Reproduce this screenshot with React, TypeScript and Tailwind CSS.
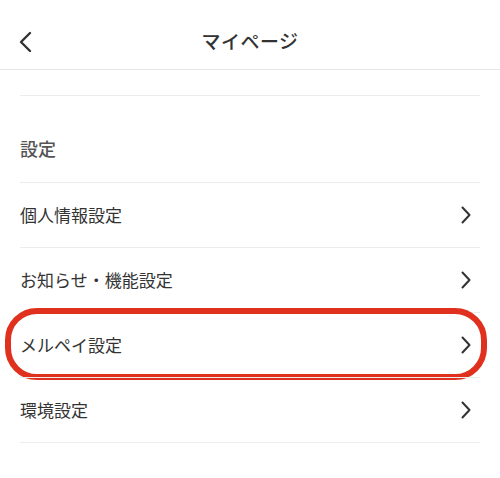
const Chevron = () => (
  <svg width="10" height="18" viewBox="0 0 10 18" className="shrink-0">
    <polyline points="1.5,1.5 8.5,9 1.5,16.5" fill="none" stroke="#333" strokeWidth="2" strokeLinecap="round" strokeLinejoin="round" />
  </svg>
)

const rows = ["個人情報設定", "お知らせ・機能設定", "メルペイ設定", "環境設定"]

export default function App() {
  return (
    <div
      className="w-[500px] h-[478px] bg-white overflow-hidden text-[#333]"
      style={{ fontFamily: '"Noto Sans CJK JP", "Noto Sans", sans-serif' }}
    >
      {/* header */}
      <div className="relative h-[70px] flex items-center justify-center border-b border-[#e6e6e6]">
        <svg width="14" height="22" viewBox="0 0 14 22" className="absolute left-[18px] top-[31px]">
          <polyline points="12,2 3,11 12,20" fill="none" stroke="#333" strokeWidth="2.4" strokeLinecap="round" strokeLinejoin="round" />
        </svg>
        <span className="text-[19px] font-medium tracking-[0.5px] mt-[14px]">マイページ</span>
      </div>

      {/* scrolled-off row, only its bottom edge peeks out */}
      <div className="h-[25px] overflow-hidden px-5">
        <div className="mt-[-19px] text-[17px] leading-[20px] text-[#e2e2e2] pl-5">配送元・お届け先住所</div>
      </div>
      <div className="mx-5 h-px bg-[#ececec]" />

      {/* section title */}
      <div className="h-[86px] flex items-end px-5 pb-[20px]">
        <span className="text-[18px] text-[#555] font-medium">設定</span>
      </div>

      {rows.map((label) => (
        <div key={label} className="relative">
          <div className="mx-5 h-px bg-[#ececec]" />
          <div className="h-[64px] flex items-center justify-between pl-5 pr-[29px]">
            <span className="text-[17px]">{label}</span>
            <Chevron />
          </div>
          {label === "メルペイ設定" && (
            <div className="absolute left-[5px] right-[13px] top-[-4px] bottom-[-3px] border-[6px] border-[#e0301e] rounded-[32px]" />
          )}
        </div>
      ))}
      <div className="mx-5 h-px bg-[#ececec]" />
    </div>
  )
}
